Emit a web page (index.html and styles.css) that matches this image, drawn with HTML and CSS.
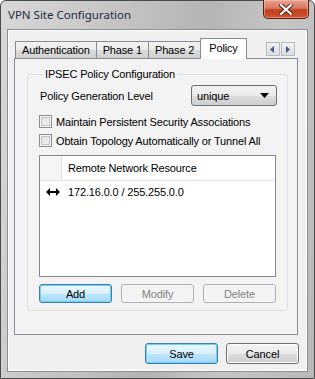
FILE: index.html
```html
<!DOCTYPE html>
<html lang="en">
<head>
    <meta charset="UTF-8">
    <title>VPN Site Configuration</title>
    <link rel="stylesheet" href="styles.css">
</head>
<body>

<div class="window">
    <div class="titlebar">
        <span class="title">VPN Site Configuration</span>
        <div class="close-btn">
            <svg width="14" height="11" viewBox="0 0 14 11">
                <path d="M2 1 L12 10 M12 1 L2 10" stroke="#5a1d12" stroke-width="4" stroke-linecap="square"/>
                <path d="M2 1 L12 10 M12 1 L2 10" stroke="#fff" stroke-width="2.2" stroke-linecap="square"/>
            </svg>
        </div>
    </div>

    <div class="client">
        <div class="tabstrip">
            <div class="tab">Authentication</div>
            <div class="tab">Phase 1</div>
            <div class="tab">Phase 2</div>
            <div class="tab active">Policy</div>
            <div class="tab-scroll">
                <span class="arrow-btn"><svg width="6" height="7" viewBox="0 0 6 7"><path d="M4 0 L0 3.5 L4 7 Z" fill="#3c5a8a"/></svg></span>
                <span class="arrow-btn"><svg width="6" height="7" viewBox="0 0 6 7"><path d="M1 0 L5 3.5 L1 7 Z" fill="#3c5a8a"/></svg></span>
            </div>
        </div>

        <div class="pane">
            <fieldset class="group">
                <legend>IPSEC Policy Configuration</legend>

                <div class="row">
                    <span class="label">Policy Generation Level</span>
                    <div class="combo">
                        <span>unique</span>
                        <svg width="9" height="5" viewBox="0 0 9 5"><path d="M0 0 H9 L4.5 5 Z" fill="#000"/></svg>
                    </div>
                </div>

                <label class="check"><span class="box"></span>Maintain Persistent Security Associations</label>
                <label class="check"><span class="box"></span>Obtain Topology Automatically or Tunnel All</label>

                <div class="listview">
                    <div class="lv-header">
                        <div class="lv-icon-col"></div>
                        <div class="lv-col">Remote Network Resource</div>
                    </div>
                    <div class="lv-row">
                        <span class="lv-icon">
                            <svg width="14" height="8" viewBox="0 0 14 8">
                                <path d="M0 4 L4 0 V3 H10 V0 L14 4 L10 8 V5 H4 V8 Z" fill="#000"/>
                            </svg>
                        </span>
                        <span>172.16.0.0 / 255.255.0.0</span>
                    </div>
                </div>

                <div class="btn-row">
                    <button class="btn default">Add</button>
                    <button class="btn" disabled>Modify</button>
                    <button class="btn" disabled>Delete</button>
                </div>
            </fieldset>
        </div>

        <div class="dialog-buttons">
            <button class="btn default">Save</button>
            <button class="btn">Cancel</button>
        </div>
    </div>
</div>

</body>
</html>
```

FILE: styles.css
```css
body {
    margin: 0;
    padding: 0;
    background: #fff;
    font-family: "Liberation Sans", Arial, sans-serif;
    font-size: 11px;
    letter-spacing: -0.15px;
    color: #000;
}
.window {
    width: 315px;
    height: 379px;
    box-sizing: border-box;
    border: 1px solid #4a4a4a;
    border-radius: 6px 6px 0 0;
    background: linear-gradient(100deg, #d8d8d8 0%, #c2c2c2 35%, #b4b4b4 55%, #c6c6c6 75%, #b8b8b8 100%);
    display: flex;
    flex-direction: column;
    padding: 0 6px 6px 6px;
}
.titlebar {
    height: 28px;
    display: flex;
    justify-content: space-between;
    align-items: flex-start;
}
.title {
    font-family: "Noto Sans", "Open Sans", sans-serif;
    font-size: 11.5px;
    letter-spacing: 0;
    color: #1c2c44;
    padding-top: 6px;
    padding-left: 1px;
}
.close-btn {
    width: 46px;
    height: 19px;
    box-sizing: border-box;
    margin-top: -1px;
    margin-right: -1px;
    border: 1px solid #5c1e14;
    border-top: none;
    border-radius: 0 0 5px 5px;
    background: linear-gradient(to bottom, #e8a493 0%, #d7785f 45%, #c1401f 55%, #d2532e 100%);
    box-shadow: inset 0 0 0 1px rgba(255, 200, 180, 0.5);
    display: flex;
    align-items: center;
    justify-content: center;
}
.client {
    flex: 1;
    border: 1px solid #8a8f96;
    background: #f0f0f0;
    box-shadow: inset 0 0 0 1px #fff;
    padding: 8px 9px 0 6px;
    display: flex;
    flex-direction: column;
}
.tabstrip {
    display: flex;
    align-items: flex-end;
    height: 20px;
    padding-left: 1px;
    position: relative;
    z-index: 1;
}
.tab {
    height: 17px;
    box-sizing: border-box;
    border: 1px solid #898c95;
    border-bottom: none;
    border-right: none;
    padding: 0 6px;
    line-height: 17px;
    background: linear-gradient(to bottom, #f3f3f3 0%, #ebebeb 50%, #dddddd 51%, #cfcfcf 100%);
    white-space: nowrap;
}
.tab:nth-child(3) {
    border-right: 1px solid #898c95;
}
.tab.active {
    height: 21px;
    margin-bottom: -1px;
    margin-left: -1px;
    border-right: 1px solid #898c95;
    background: #fff;
    padding: 0 8px;
    line-height: 18px;
}
.tab-scroll {
    margin-left: auto;
    margin-right: 3px;
    margin-bottom: 2px;
    display: flex;
    gap: 1px;
}
.arrow-btn {
    width: 14px;
    height: 14px;
    box-sizing: border-box;
    border: 1px solid #b5b9c0;
    background: linear-gradient(to bottom, #f2f2f2, #dcdcdc);
    display: flex;
    align-items: center;
    justify-content: center;
}
.pane {
    height: 277px;
    box-sizing: border-box;
    border: 1px solid #898c95;
    background: #f3f3f3;
    padding: 9px 10px 0 12px;
}
.group {
    margin: 0;
    height: 243px;
    box-sizing: border-box;
    border: 1px solid #d5dfe5;
    border-radius: 3px;
    padding: 4px 11px 0 11px;
    display: flex;
    flex-direction: column;
}
.group legend {
    padding: 0 2px;
    margin-left: 4px;
}
.row {
    display: flex;
    justify-content: space-between;
    align-items: center;
    height: 21px;
    margin-top: 1px;
}
.label {
    padding-left: 1px;
}
.combo {
    width: 86px;
    height: 21px;
    box-sizing: border-box;
    border: 1px solid #707070;
    border-radius: 3px;
    background: linear-gradient(to bottom, #f2f2f2 0%, #ebebeb 50%, #dddddd 51%, #cfcfcf 100%);
    display: flex;
    align-items: center;
    justify-content: space-between;
    padding: 0 7px 0 5px;
    margin-right: -1px;
}
.check {
    display: flex;
    align-items: center;
    height: 13px;
    margin-top: 6px;
}
.check:first-of-type {
    margin-top: 9px;
}
.box {
    width: 13px;
    height: 13px;
    box-sizing: border-box;
    border: 1px solid #8e8f8f;
    background: linear-gradient(135deg, #dcdcdc, #f6f6f6);
    box-shadow: inset 0 0 0 1px #f4f4f4, inset 0 0 0 2px #c6c6c6;
    margin-right: 4px;
}
.listview {
    margin-top: 8px;
    height: 122px;
    box-sizing: border-box;
    border: 1px solid #828790;
    background: #fff;
}
.lv-header {
    display: flex;
    height: 24px;
    border-bottom: 1px solid #e5e5e5;
}
.lv-icon-col {
    width: 21px;
    background: #f5f5f5;
    border-right: 1px solid #e5e5e5;
}
.lv-col {
    flex: 1;
    padding-left: 6px;
    line-height: 24px;
}
.lv-row {
    display: flex;
    align-items: center;
    height: 22px;
    padding-left: 6px;
}
.lv-icon {
    width: 22px;
    display: flex;
}
.btn-row {
    display: flex;
    gap: 9px;
    margin-top: 7px;
}
.btn {
    width: 73px;
    height: 19px;
    box-sizing: border-box;
    font-family: inherit;
    font-size: 11px;
    letter-spacing: -0.15px;
    color: #000;
    border: 1px solid #707070;
    border-radius: 3px;
    padding: 0;
    background: linear-gradient(to bottom, #f2f2f2 0%, #ebebeb 50%, #dddddd 51%, #cfcfcf 100%);
    box-shadow: inset 0 0 0 1px #fcfcfc;
}
.btn.default {
    border-color: #3c7fb1;
    background: linear-gradient(to bottom, #eaf6fd 0%, #d9f0fc 50%, #bee6fd 51%, #a7d9f5 100%);
    box-shadow: inset 0 0 0 1px #6fd0f5;
}
.btn:disabled {
    border-color: #adb2b5;
    background: #f4f4f4;
    color: #838383;
    box-shadow: none;
}
.dialog-buttons {
    display: flex;
    justify-content: flex-end;
    gap: 8px;
    margin-top: 8px;
    margin-right: -1px;
}
.dialog-buttons .btn {
    height: 21px;
}
```
